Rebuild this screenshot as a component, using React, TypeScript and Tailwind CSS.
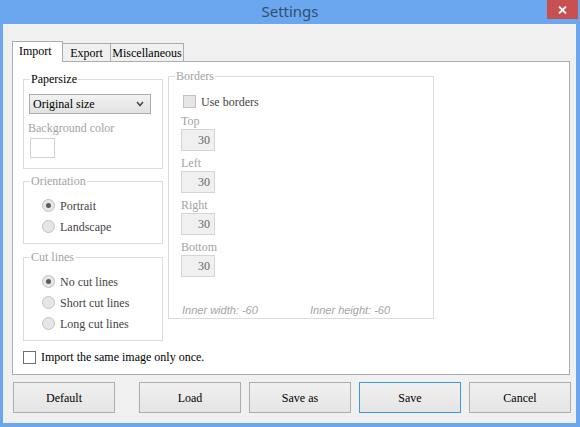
import React from 'react';

// Disabled radio, with a dot when it is the selected one
const Radio = ({ label, checked }: { label: string; checked?: boolean }) => (
  <div className="h-[21px] flex items-center">
    <span className="w-[13px] h-[13px] rounded-full border border-[#c2c2c2] bg-[#e6e6e6] flex items-center justify-center">
      {checked && <span className="w-[5px] h-[5px] rounded-full bg-[#5c5c5c]" />}
    </span>
    <span className="ml-[5px] text-[#444]">{label}</span>
  </div>
);

const GroupBox = ({
  title,
  enabled,
  className,
  children,
}: {
  title: string;
  enabled?: boolean;
  className: string;
  children: React.ReactNode;
}) => (
  <div className={`relative border border-[#dcdcdc] ${className}`}>
    <span
      className={`absolute -top-[8px] left-[6px] bg-white px-[1px] leading-[14px] ${
        enabled ? 'text-black' : 'text-[#a3a3a3]'
      }`}
    >
      {title}
    </span>
    {children}
  </div>
);

const NumberBox = ({ label }: { label: string }) => (
  <div className="flex flex-col">
    <span className="leading-[14px] text-[#a3a3a3]">{label}</span>
    <div className="mt-[1px] w-[34px] h-[22px] border border-[#d5d5d5] bg-[#f0f0f0] flex items-center justify-end pr-[4px] text-[#666]">
      30
    </div>
  </div>
);

const DialogButton = ({ label, focused, className }: { label: string; focused?: boolean; className: string }) => (
  <button
    className={`w-[102px] h-[31px] border bg-gradient-to-b from-[#f0f0f0] to-[#e5e5e5] text-black ${
      focused ? 'border-[#3c98e8]' : 'border-[#acacac]'
    } ${className}`}
  >
    {label}
  </button>
);

export default function App() {
  return (
    <div className="w-[580px] h-[427px] bg-[#6ba7ef] flex flex-col font-['Liberation_Serif'] text-[12px] text-black">
      {/* title bar */}
      <div className="relative h-[24px] flex items-center justify-center">
        <span className="font-['Noto_Sans'] text-[15px] leading-none text-[#30506f] mt-[-1px]">Settings</span>
        <button className="absolute right-[2px] top-0 w-[31px] h-[19px] bg-[#c75050] flex items-center justify-center">
          <svg width="9" height="8" viewBox="0 0 9 8">
            <path d="M1 0.5 L8 7.5 M8 0.5 L1 7.5" stroke="white" strokeWidth="1.8" />
          </svg>
        </button>
      </div>

      {/* client area */}
      <div className="flex-1 ml-[3px] mr-[4px] mb-[4px] bg-[#f0f0f0] flex flex-col">
        <div className="mt-[17px] ml-[9px] w-[558px] flex flex-col">
          {/* tabs */}
          <div className="flex items-end relative z-10">
            <div className="w-[51px] h-[21px] bg-white border-x border-t border-[#adadad] pl-[6px] pt-[2px] leading-[14px]">
              Import
            </div>
            <div className="-ml-px w-[49px] h-[18px] mb-px bg-[#f0f0f0] border-x border-t border-[#adadad] flex items-center justify-center leading-[14px]">
              Export
            </div>
            <div className="-ml-px w-[74px] h-[18px] mb-px bg-[#f0f0f0] border-x border-t border-[#adadad] flex items-center justify-center leading-[14px]">
              Miscellaneous
            </div>
          </div>

          {/* tab page */}
          <div className="-mt-px h-[314px] border border-[#adadad] bg-white flex flex-col">
            <div className="flex pl-[10px]">
              <div className="flex flex-col mt-[17px] w-[140px]">
                <GroupBox title="Papersize" enabled className="h-[90px] flex flex-col">
                  <div className="mt-[14px] ml-[5px] w-[122px] h-[20px] border border-[#acacac] bg-gradient-to-b from-[#f2f2f2] to-[#e2e2e2] flex items-center justify-between pl-[3px] pr-[6px]">
                    <span>Original size</span>
                    <svg width="8" height="6" viewBox="0 0 8 6">
                      <path d="M1 1 L4 4.5 L7 1" stroke="#4a4a4a" strokeWidth="1.6" fill="none" />
                    </svg>
                  </div>
                  <span className="mt-[7px] ml-[4px] leading-[14px] text-[#a3a3a3]">Background color</span>
                  <div className="mt-[3px] ml-[6px] w-[25px] h-[20px] border border-[#d0d0d0] bg-white" />
                </GroupBox>

                <GroupBox title="Orientation" className="mt-[12px] h-[63px] pt-[13px] pl-[18px]">
                  <Radio label="Portrait" checked />
                  <Radio label="Landscape" />
                </GroupBox>

                <GroupBox title="Cut lines" className="mt-[13px] h-[84px] pt-[13px] pl-[18px]">
                  <Radio label="No cut lines" checked />
                  <Radio label="Short cut lines" />
                  <Radio label="Long cut lines" />
                </GroupBox>
              </div>

              <GroupBox title="Borders" className="ml-[5px] mt-[14px] w-[266px] h-[243px] flex flex-col pl-[12px]">
                <div className="mt-[18px] ml-[2px] h-[13px] flex items-center">
                  <span className="w-[13px] h-[13px] border border-[#c2c2c2] bg-[#e6e6e6]" />
                  <span className="ml-[5px] text-[#444]">Use borders</span>
                </div>
                <div className="mt-[6px] flex flex-col gap-[5px]">
                  <NumberBox label="Top" />
                  <NumberBox label="Left" />
                  <NumberBox label="Right" />
                  <NumberBox label="Bottom" />
                </div>
                <div className="mt-auto mb-[1px] flex font-['Liberation_Sans'] italic text-[11px] leading-[13px] text-[#a3a3a3]">
                  <span className="w-[129px] pl-[1px]">Inner width: -60</span>
                  <span>Inner height: -60</span>
                </div>
              </GroupBox>
            </div>

            <div className="mt-[7px] ml-[10px] flex items-center">
              <span className="w-[13px] h-[13px] border border-[#707070] bg-white" />
              <span className="ml-[5px]">Import the same image only once.</span>
            </div>
          </div>
        </div>

        {/* buttons */}
        <div className="mt-[7px] flex">
          <DialogButton label="Default" className="ml-[10px]" />
          <DialogButton label="Load" className="ml-[24px]" />
          <DialogButton label="Save as" className="ml-[8px]" />
          <DialogButton label="Save" focused className="ml-[8px]" />
          <DialogButton label="Cancel" className="ml-[8px]" />
        </div>
      </div>
    </div>
  );
}
